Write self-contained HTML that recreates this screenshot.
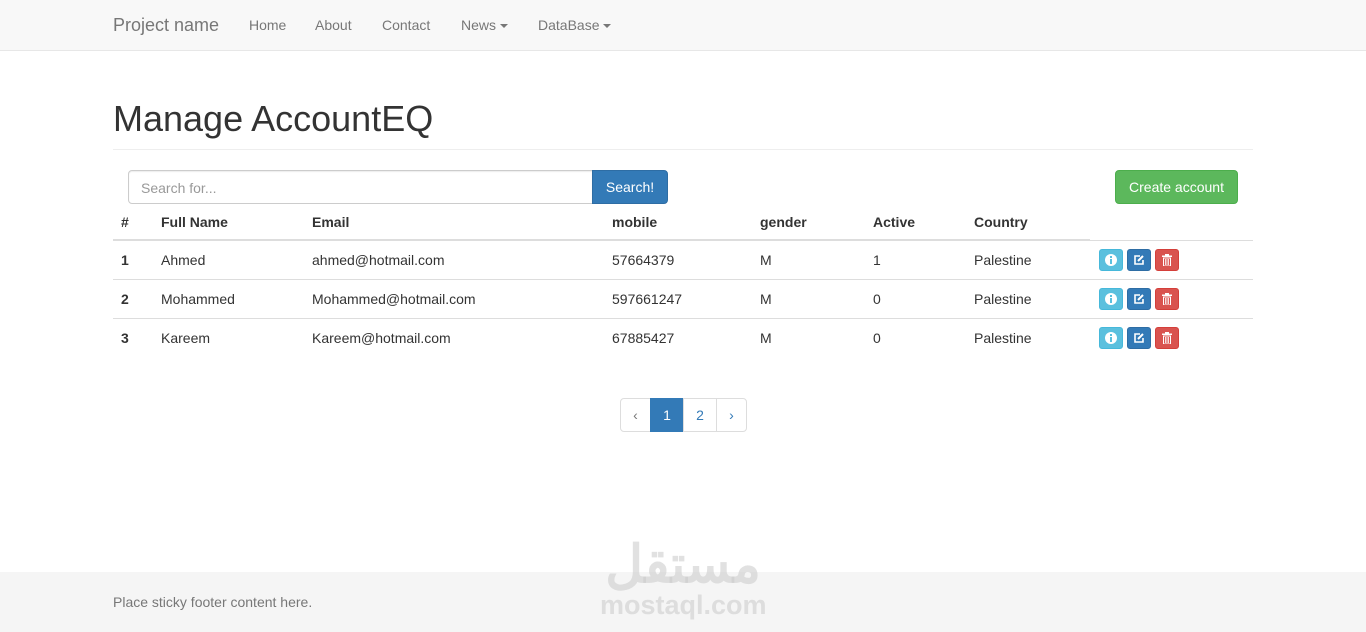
<!DOCTYPE html>
<html><head><meta charset="utf-8"><style>
*{box-sizing:border-box}
body{margin:0;font-family:"Liberation Sans",Helvetica,Arial,sans-serif;font-size:14px;color:#333;background:#fff;width:1366px;height:632px;overflow:hidden;position:relative}
.nav{height:51px;background:#f8f8f8;border-bottom:1px solid #e7e7e7;position:relative}
.nav span{position:absolute;top:17px;color:#777;font-size:14px}
.brand{font-size:18px!important;top:15px!important}
.caret{display:inline-block;width:0;height:0;border-top:4px solid #777;border-left:4px solid transparent;border-right:4px solid transparent;vertical-align:middle;margin-left:4px}
h1{position:absolute;left:113px;top:96px;margin:0;font-weight:500;font-size:36px;line-height:46px}
.hr{position:absolute;left:113px;width:1140px;top:149px;border-top:1px solid #eee}
.inp{position:absolute;left:128px;top:170px;width:465px;height:34px;border:1px solid #ccc;border-radius:4px 0 0 4px;color:#999;padding:9px 12px;box-shadow:inset 0 1px 1px rgba(0,0,0,.075)}
.sbtn{position:absolute;left:592px;top:170px;width:76px;height:34px;background:#337ab7;border:1px solid #2e6da4;color:#fff;border-radius:0 4px 4px 0;text-align:center;line-height:32px}
.cbtn{position:absolute;left:1115px;top:170px;width:123px;height:34px;background:#5cb85c;border:1px solid #4cae4c;color:#fff;border-radius:4px;text-align:center;line-height:32px}
.t{position:absolute;left:113px;width:1140px}
.row{position:absolute;left:0;width:1140px;height:38px;border-top:1px solid #ddd}
.c{position:absolute;top:11px}
.hd{font-weight:bold}
.b{position:absolute;top:8px;width:24px;height:22px;border-radius:3px;border:1px solid}
.b svg{position:absolute;left:5px;top:4px}
.i1{left:986px;background:#5bc0de;border-color:#46b8da}
.i2{left:1014px;background:#337ab7;border-color:#2e6da4}
.i3{left:1042px;background:#d9534f;border-color:#d43f3a}
.pg{position:absolute;top:398px;height:34px;border:1px solid #ddd;color:#337ab7;text-align:center;line-height:32px}
.foot{position:absolute;left:0;top:572px;width:1366px;height:60px;background:#f5f5f5}
.foot span{position:absolute;left:113px;top:22px;color:#777}
.wm{position:absolute;left:600px;width:166px;text-align:center;color:rgba(200,200,200,.55);font-weight:bold}
</style></head><body>
<div class="nav">
<span class="brand" style="left:113px">Project name</span>
<span style="left:249px">Home</span>
<span style="left:315px">About</span>
<span style="left:382px">Contact</span>
<span style="left:461px">News<i class="caret"></i></span>
<span style="left:538px">DataBase<i class="caret"></i></span>
</div>
<h1>Manage AccountEQ</h1>
<div class="hr"></div>
<div class="inp">Search for...</div>
<div class="sbtn">Search!</div>
<div class="cbtn">Create account</div>
<div class="t" style="top:203px">
<div class="row hd" style="top:0;border:none;height:38px;border-bottom:2px solid #ddd;width:977px">
<span class="c" style="left:8px">#</span><span class="c" style="left:48px">Full Name</span><span class="c" style="left:199px">Email</span><span class="c" style="left:499px">mobile</span><span class="c" style="left:647px">gender</span><span class="c" style="left:760px">Active</span><span class="c" style="left:861px">Country</span></div>

<div class="row" style="top:37px"><span class="c hd" style="left:8px">1</span><span class="c" style="left:48px">Ahmed</span><span class="c" style="left:199px">ahmed@hotmail.com</span><span class="c" style="left:499px">57664379</span><span class="c" style="left:647px">M</span><span class="c" style="left:760px">1</span><span class="c" style="left:861px">Palestine</span>
<div class="b i1"><svg width="12" height="12" viewBox="0 0 12 12"><circle cx="6" cy="6" r="6" fill="#fff"/><rect x="5" y="5" width="2" height="5" fill="#5bc0de"/><rect x="5" y="2" width="2" height="2" fill="#5bc0de"/></svg></div>
<div class="b i2"><svg width="12" height="12" viewBox="0 0 12 12"><path d="M7 2H2v8h8V6" fill="none" stroke="#fff" stroke-width="1.6"/><path d="M5 7l5-5" stroke="#fff" stroke-width="2"/></svg></div>
<div class="b i3"><svg width="12" height="12" viewBox="0 0 12 12"><rect x="1" y="1.5" width="10" height="1.5" fill="#fff"/><rect x="4" y="0" width="4" height="1.5" fill="#fff"/><path d="M2.5 4h7v8h-7z" fill="none" stroke="#fff" stroke-width="1"/><path d="M4.5 5v6M6 5v6M7.5 5v6" stroke="#fff" stroke-width=".8"/></svg></div></div>

<div class="row" style="top:76px"><span class="c hd" style="left:8px">2</span><span class="c" style="left:48px">Mohammed</span><span class="c" style="left:199px">Mohammed@hotmail.com</span><span class="c" style="left:499px">597661247</span><span class="c" style="left:647px">M</span><span class="c" style="left:760px">0</span><span class="c" style="left:861px">Palestine</span>
<div class="b i1"><svg width="12" height="12" viewBox="0 0 12 12"><circle cx="6" cy="6" r="6" fill="#fff"/><rect x="5" y="5" width="2" height="5" fill="#5bc0de"/><rect x="5" y="2" width="2" height="2" fill="#5bc0de"/></svg></div>
<div class="b i2"><svg width="12" height="12" viewBox="0 0 12 12"><path d="M7 2H2v8h8V6" fill="none" stroke="#fff" stroke-width="1.6"/><path d="M5 7l5-5" stroke="#fff" stroke-width="2"/></svg></div>
<div class="b i3"><svg width="12" height="12" viewBox="0 0 12 12"><rect x="1" y="1.5" width="10" height="1.5" fill="#fff"/><rect x="4" y="0" width="4" height="1.5" fill="#fff"/><path d="M2.5 4h7v8h-7z" fill="none" stroke="#fff" stroke-width="1"/><path d="M4.5 5v6M6 5v6M7.5 5v6" stroke="#fff" stroke-width=".8"/></svg></div></div>

<div class="row" style="top:115px"><span class="c hd" style="left:8px">3</span><span class="c" style="left:48px">Kareem</span><span class="c" style="left:199px">Kareem@hotmail.com</span><span class="c" style="left:499px">67885427</span><span class="c" style="left:647px">M</span><span class="c" style="left:760px">0</span><span class="c" style="left:861px">Palestine</span>
<div class="b i1"><svg width="12" height="12" viewBox="0 0 12 12"><circle cx="6" cy="6" r="6" fill="#fff"/><rect x="5" y="5" width="2" height="5" fill="#5bc0de"/><rect x="5" y="2" width="2" height="2" fill="#5bc0de"/></svg></div>
<div class="b i2"><svg width="12" height="12" viewBox="0 0 12 12"><path d="M7 2H2v8h8V6" fill="none" stroke="#fff" stroke-width="1.6"/><path d="M5 7l5-5" stroke="#fff" stroke-width="2"/></svg></div>
<div class="b i3"><svg width="12" height="12" viewBox="0 0 12 12"><rect x="1" y="1.5" width="10" height="1.5" fill="#fff"/><rect x="4" y="0" width="4" height="1.5" fill="#fff"/><path d="M2.5 4h7v8h-7z" fill="none" stroke="#fff" stroke-width="1"/><path d="M4.5 5v6M6 5v6M7.5 5v6" stroke="#fff" stroke-width=".8"/></svg></div></div>
</div>
<div class="pg" style="left:620px;width:31px;border-radius:4px 0 0 4px;color:#777">‹</div>
<div class="pg" style="left:650px;width:34px;background:#337ab7;border-color:#337ab7;color:#fff">1</div>
<div class="pg" style="left:683px;width:34px">2</div>
<div class="pg" style="left:716px;width:31px;border-radius:0 4px 4px 0">›</div>
<div class="foot"><span>Place sticky footer content here.</span></div>
<div class="wm" style="top:528px;font-size:52px;font-family:'Noto Sans CJK SC',sans-serif;line-height:64px">مستقل</div>
<div class="wm" style="top:590px;font-size:27px">mostaql.com</div>
</body></html>
